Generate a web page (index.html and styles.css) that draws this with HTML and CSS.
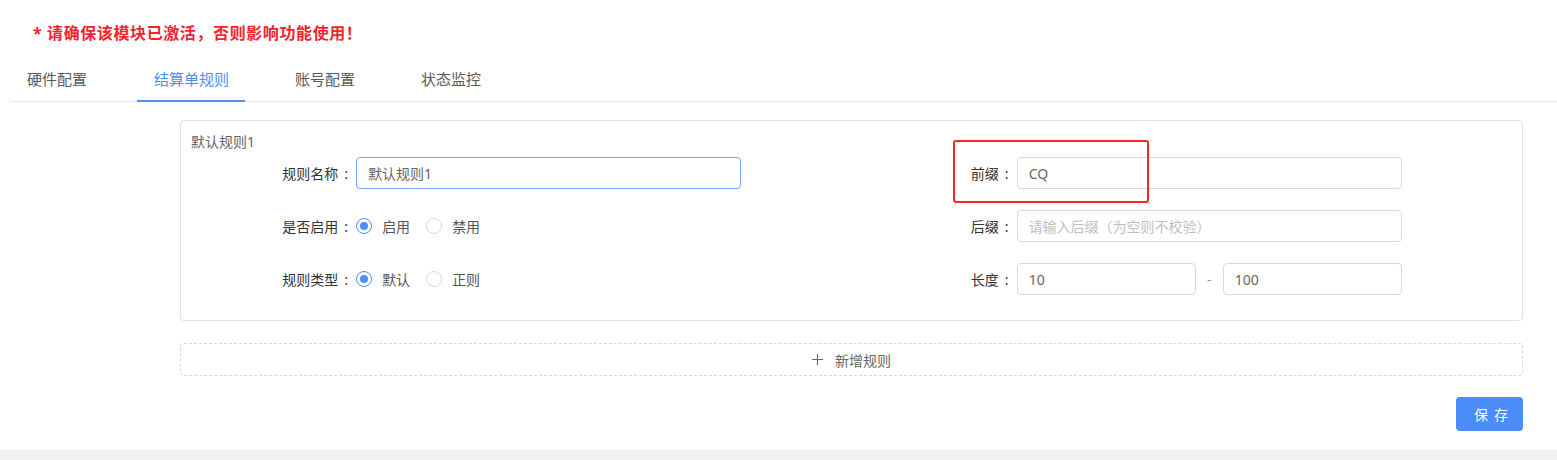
FILE: index.html
```html
<!DOCTYPE html>
<html lang="zh-CN">
<head>
  <meta charset="UTF-8" />
  <title>结算单规则</title>
  <link rel="stylesheet" href="styles.css">
</head>
<body>
  <div class="page">
    <p class="warning">* 请确保该模块已激活，否则影响功能使用！</p>

    <!-- Tabs -->
    <div class="tabs-nav">
      <div class="tab">硬件配置</div>
      <div class="tab active">结算单规则</div>
      <div class="tab">账号配置</div>
      <div class="tab">状态监控</div>
    </div>

    <div class="content">
      <div class="rule-card">
        <div class="rule-title">默认规则1</div>

        <div class="form-row">
          <div class="form-item">
            <label class="form-label">规则名称</label>
            <div class="form-control">
              <input class="text-input focused" type="text" value="默认规则1">
            </div>
          </div>
          <div class="form-item">
            <label class="form-label">前缀</label>
            <div class="form-control">
              <input class="text-input" type="text" value="CQ">
            </div>
          </div>
        </div>

        <div class="form-row">
          <div class="form-item">
            <label class="form-label">是否启用</label>
            <div class="form-control radio-group">
              <span class="radio checked"><span class="radio-dot"></span>启用</span>
              <span class="radio"><span class="radio-dot"></span>禁用</span>
            </div>
          </div>
          <div class="form-item">
            <label class="form-label">后缀</label>
            <div class="form-control">
              <input class="text-input" type="text" placeholder="请输入后缀（为空则不校验）">
            </div>
          </div>
        </div>

        <div class="form-row last">
          <div class="form-item">
            <label class="form-label">规则类型</label>
            <div class="form-control radio-group">
              <span class="radio checked"><span class="radio-dot"></span>默认</span>
              <span class="radio"><span class="radio-dot"></span>正则</span>
            </div>
          </div>
          <div class="form-item">
            <label class="form-label">长度</label>
            <div class="form-control range">
              <input class="text-input" type="text" value="10">
              <span class="range-sep">-</span>
              <input class="text-input" type="text" value="100">
            </div>
          </div>
        </div>

        <!-- annotation box -->
        <div class="mark-box"></div>
      </div>

      <button class="add-btn">
        <svg width="11" height="11" viewBox="0 0 11 11"><path d="M5.5 0v11M0 5.5h11" stroke="#666" stroke-width="1.1" fill="none"/></svg>
        新增规则
      </button>

      <div class="footer">
        <button class="save-btn">保存</button>
      </div>
    </div>
  </div>
</body>
</html>
```

FILE: styles.css
```css
* {
  box-sizing: border-box;
}

body {
  margin: 0;
  background: #f2f2f2;
  font-family: "Noto Sans", "Noto Sans CJK SC", sans-serif;
  font-size: 14px;
  color: #333;
}

.page {
  background: #fff;
  height: 450px;
  padding-left: 11px;
  overflow: hidden;
}

.warning {
  margin: 21px 0 0;
  padding-left: 22px;
  line-height: 24px;
  font-size: 16px;
  font-weight: bold;
  letter-spacing: 0.6px;
  color: #f5222d;
}

/* Tabs */
.tabs-nav {
  display: flex;
  margin-top: 12px;
  border-bottom: 1px solid #e8e8e8;
}

.tab {
  position: relative;
  padding: 12px 16px;
  margin-right: 34px;
  line-height: 20px;
  font-size: 15px;
  color: #595959;
}

.tab.active {
  padding-left: 17px;
  color: #4d8ef7;
}

.tab.active::after {
  content: "";
  position: absolute;
  left: 0;
  right: 0;
  bottom: -1px;
  height: 2px;
  background: #4a8ff7;
}

.content {
  margin: 18px 34px 0 169px;
}

/* Rule card */
.rule-card {
  position: relative;
  border: 1px solid #e0e0e0;
  border-radius: 4px;
  padding: 11px 10px 25px;
}

.rule-title {
  line-height: 20px;
  margin-bottom: 5px;
  color: #666;
}

.form-row {
  display: flex;
  margin-bottom: 21px;
}

.form-row.last {
  margin-bottom: 0;
}

.form-item {
  display: flex;
  align-items: center;
  width: 50%;
  height: 32px;
}

.form-label {
  width: 25%;
  text-align: right;
  color: #333;
}

.form-label::after {
  content: ":";
  margin: 0 8px 0 6px;
}

.form-control {
  width: 58.333%;
}

.text-input {
  width: 100%;
  height: 32px;
  padding: 0 11px;
  border: 1px solid #d9d9d9;
  border-radius: 4px;
  font-family: inherit;
  font-size: 14px;
  color: #666;
  outline: none;
}

.text-input::placeholder {
  color: #bfbfbf;
}

.text-input.focused {
  border-color: #6fa8f8;
}

.range {
  display: flex;
  align-items: center;
}

.range .text-input {
  flex: 1;
  width: auto;
  min-width: 0;
}

.range-sep {
  width: 27px;
  text-align: center;
  color: #999;
}

/* Radios */
.radio-group {
  display: flex;
  align-items: center;
}

.radio {
  display: flex;
  align-items: center;
  margin-right: 8px;
  color: #555;
}

.radio-dot {
  position: relative;
  width: 16px;
  height: 16px;
  border: 1px solid #d9d9d9;
  border-radius: 50%;
  margin-right: 10px;
}

.radio.checked .radio-dot {
  border-color: #4a8ff7;
}

.radio.checked .radio-dot::after {
  content: "";
  position: absolute;
  left: 3px;
  top: 3px;
  width: 8px;
  height: 8px;
  border-radius: 50%;
  background: #4a8ff7;
}

.radio + .radio {
  margin-left: 8px;
}

.mark-box {
  position: absolute;
  left: 772px;
  top: 19px;
  width: 196px;
  height: 63px;
  border: 2px solid #f42b1e;
  border-radius: 3px;
}

/* Buttons */
.add-btn {
  display: flex;
  align-items: center;
  justify-content: center;
  width: 100%;
  height: 33px;
  margin-top: 22px;
  border: 1px dashed #d9d9d9;
  border-radius: 4px;
  background: #fff;
  font-family: inherit;
  font-size: 14px;
  color: #666;
}

.add-btn svg {
  margin-right: 12px;
}

.footer {
  display: flex;
  justify-content: flex-end;
  margin-top: 21px;
}

.save-btn {
  height: 34px;
  padding: 0 9px 0 18px;
  border: none;
  border-radius: 4px;
  background: #4a8cf8;
  font-family: inherit;
  font-size: 14px;
  letter-spacing: 6px;
  color: #fff;
}
```
